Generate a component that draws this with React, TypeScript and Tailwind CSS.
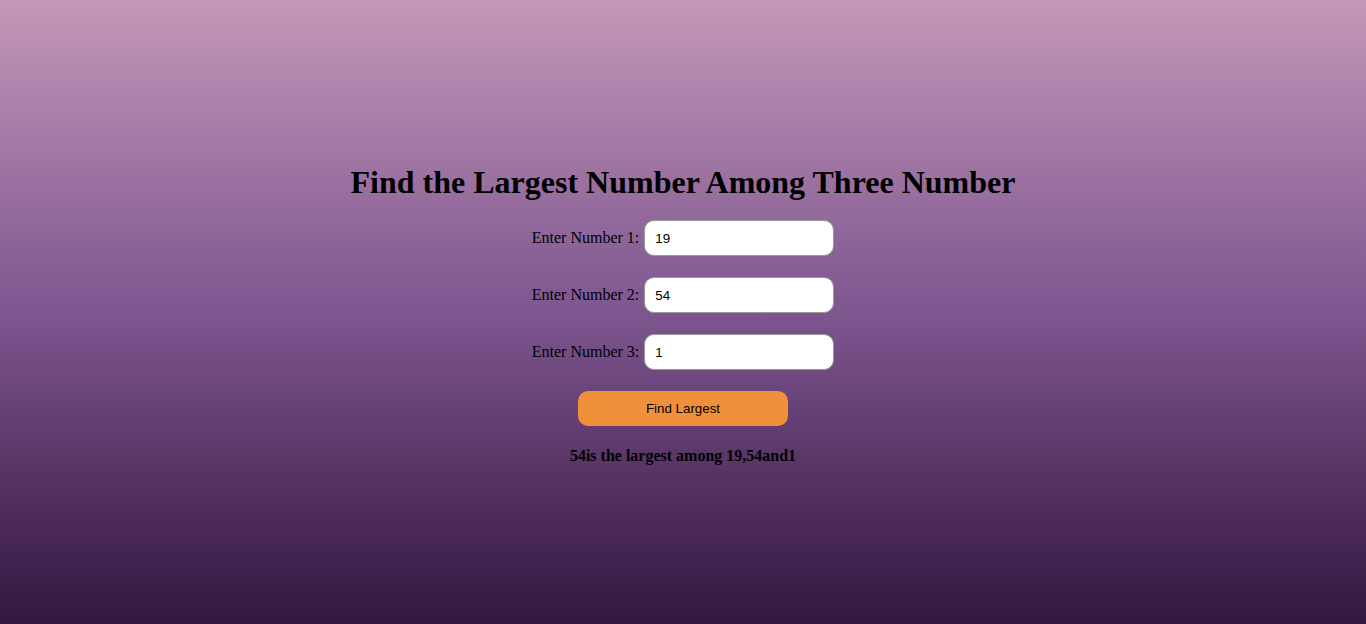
import React from "react";

export default function App() {
  const rows = [
    { label: "Enter Number 1:", value: "19" },
    { label: "Enter Number 2:", value: "54" },
    { label: "Enter Number 3:", value: "1" },
  ];
  return (
    <div
      className="min-h-screen w-full flex flex-col items-center justify-center pt-[5px] bg-gradient-to-b from-[#c597b8] via-[#7e5690] to-[#34163f] text-black"
      style={{ fontFamily: '"Liberation Serif", "Times New Roman", serif' }}
    >
      <h1 className="text-[32px] font-bold leading-[37px] m-0">
        Find the Largest Number Among Three Number
      </h1>
      <div className="flex flex-col items-center gap-[21px] mt-[19px]">
        {rows.map((r) => (
          <div key={r.label} className="flex items-center gap-[5px] text-[16px]">
            <label>{r.label}</label>
            <input
              type="text"
              readOnly
              value={r.value}
              className="w-[190px] h-[36px] rounded-[10px] border border-[#999] bg-white pl-[10px] text-[13.33px] text-black outline-none"
              style={{ fontFamily: '"Liberation Sans", Arial, sans-serif' }}
            />
          </div>
        ))}
        <button
          className="w-[210px] h-[35px] rounded-[10px] bg-[#f0903a] text-[13.33px] text-black"
          style={{ fontFamily: '"Liberation Sans", Arial, sans-serif' }}
        >
          Find Largest
        </button>
        <p className="text-[16px] font-bold leading-[18px] m-0">
          54is the largest among 19,54and1
        </p>
      </div>
    </div>
  );
}
